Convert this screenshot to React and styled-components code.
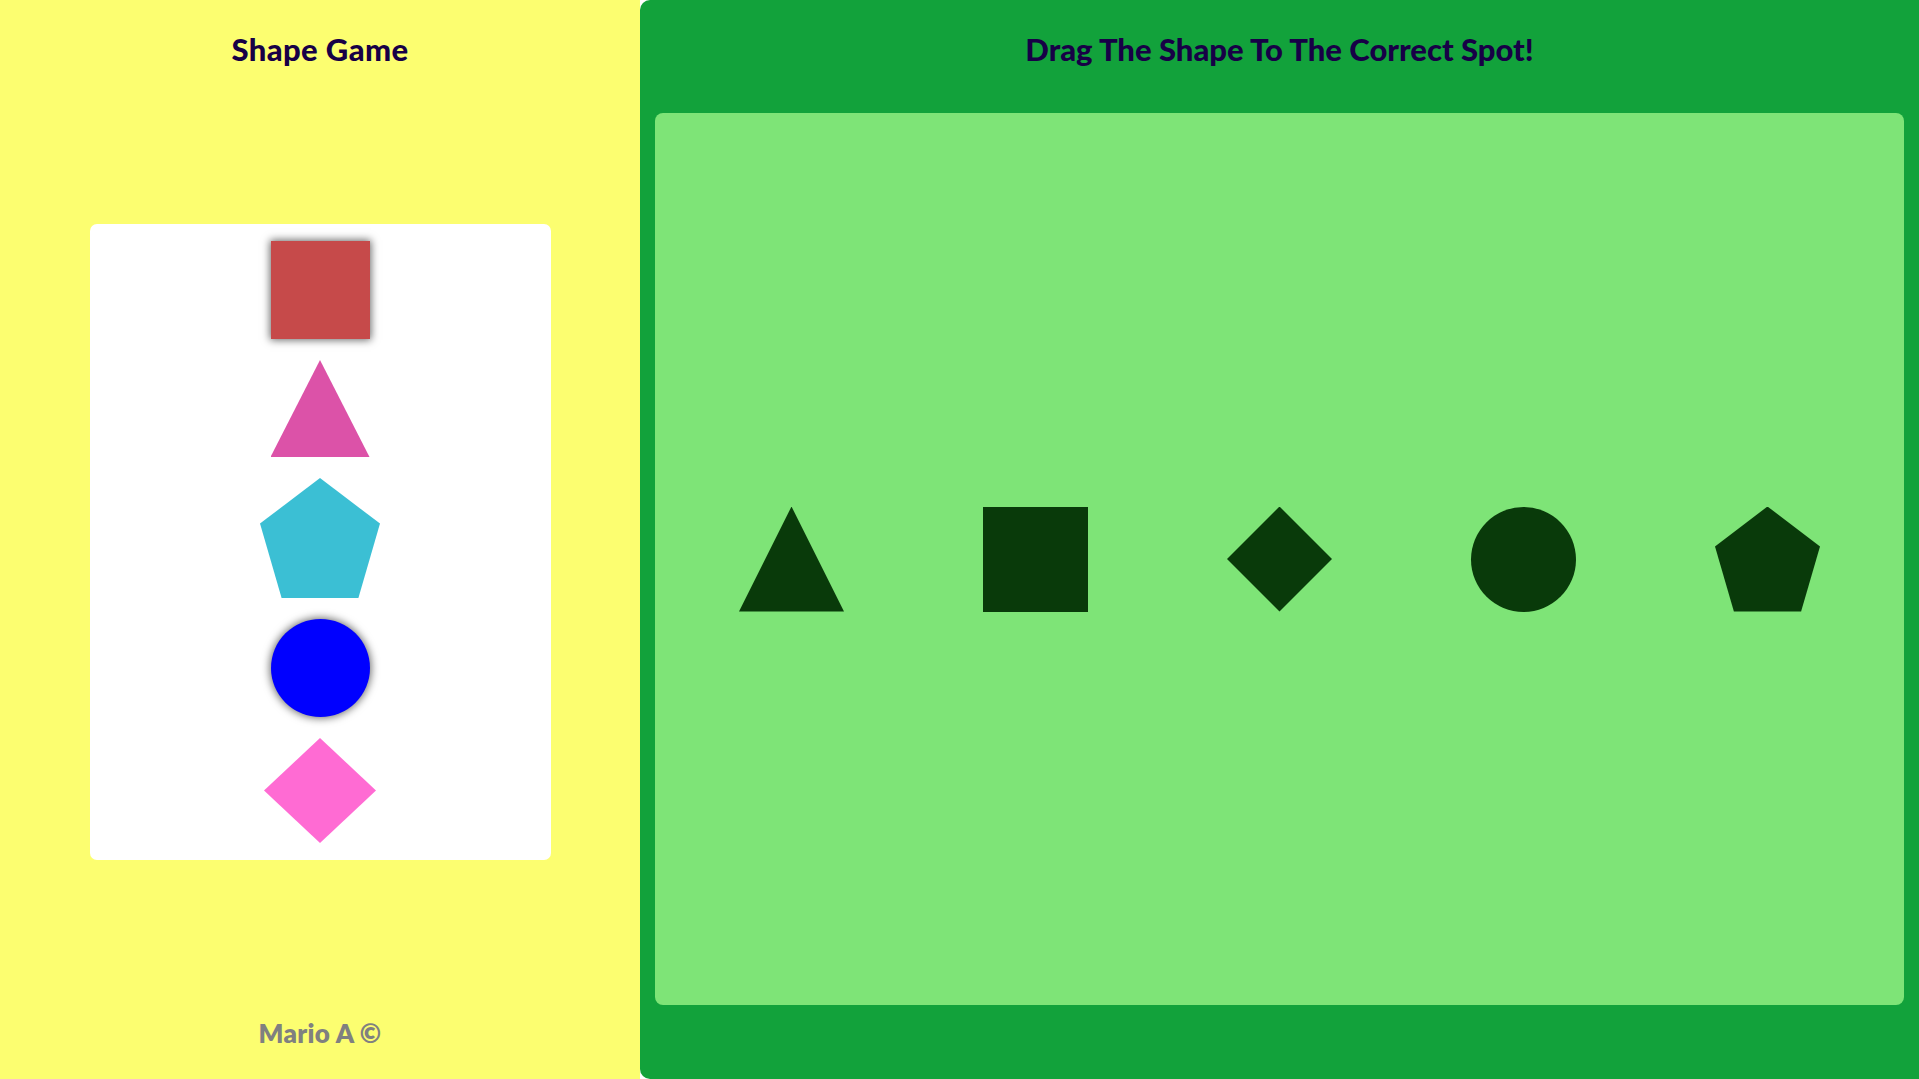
import React from "react";
import styled, { createGlobalStyle, css } from "styled-components";

const Global = createGlobalStyle`
  html, body { margin: 0; padding: 0; }
  body { font-family: Lato, "Noto Sans", sans-serif; }
  * { box-sizing: border-box; }
`;

const Page = styled.div`
  display: grid;
  grid-template-columns: 640px 1fr;
  height: 1079px;
  width: 1919px;
  overflow: hidden;
`;

const Side = styled.aside`
  background: #fcfe70;
  display: flex;
  flex-direction: column;
  align-items: center;
`;

const Heading = styled.h1`
  margin: 0;
  height: ${(p) => p.$height}px;
  padding-top: 31px;
  font-family: Lato, "Noto Sans", sans-serif;
  font-weight: 900;
  font-size: 31px;
  line-height: 36px;
  color: #170046;
  text-align: center;
  letter-spacing: ${(p) => p.$spacing}px;
`;

const CardArea = styled.div`
  flex: 1;
  display: flex;
  align-items: flex-start;
  justify-content: center;
  padding-top: 124px;
  width: 100%;
`;

const Card = styled.div`
  width: 461px;
  height: 636px;
  background: #ffffff;
  border-radius: 7px;
  padding-top: 17px;
  display: flex;
  flex-direction: column;
  align-items: center;
  gap: 21px;
`;

const clipFor = (kind) => {
  switch (kind) {
    case "triangle":
      return "polygon(50% 0, 100% 100%, 0 100%)";
    case "pentagon":
      return "polygon(50% 0%, 100% 38%, 82% 100%, 18% 100%, 0% 38%)";
    case "diamond":
      return "polygon(50% 0, 100% 50%, 50% 100%, 0 50%)";
    default:
      return "none";
  }
};

const Piece = styled.div`
  flex: none;
  width: ${(p) => p.$w}px;
  height: ${(p) => p.$h}px;
  background: ${(p) => p.$color};
  clip-path: ${(p) => clipFor(p.$kind)};
  border-radius: ${(p) => (p.$kind === "circle" ? "50%" : "0")};
  ${(p) =>
    (p.$kind === "square" || p.$kind === "circle") &&
    css`
      box-shadow: 0 0 8px 1px rgba(0, 0, 0, 0.6);
    `}
`;

const Footer = styled.footer`
  height: 90px;
  padding-top: 29px;
  font-family: Lato, "Noto Sans", sans-serif;
  font-weight: 800;
  font-size: 26px;
  line-height: 30px;
  color: #808080;
  letter-spacing: 0.3px;
`;

const Board = styled.main`
  background: #12a23b;
  border-radius: 10px 0 0 10px;
  display: flex;
  flex-direction: column;
  padding: 0 15px 74px 15px;
`;

const DropZone = styled.section`
  flex: 1;
  background: #7ee477;
  border-radius: 8px;
  display: flex;
  align-items: center;
  justify-content: center;
  gap: 139px;
`;

const Slot = styled.div`
  flex: none;
  width: 105px;
  height: 105px;
  background: #093a0a;
  clip-path: ${(p) => clipFor(p.$kind)};
  border-radius: ${(p) => (p.$kind === "circle" ? "50%" : "0")};
`;

const pieces = [
  { kind: "square", w: 99, h: 98, color: "#c64a4a" },
  { kind: "triangle", w: 99, h: 97, color: "#dc52a8" },
  { kind: "pentagon", w: 120, h: 120, color: "#3bbfd4" },
  { kind: "circle", w: 99, h: 98, color: "#0000ff" },
  { kind: "diamond", w: 112, h: 105, color: "#ff6bd3" },
];

const slots = ["triangle", "square", "diamond", "circle", "pentagon"];

export default function App() {
  return (
    <>
      <Global />
      <Page>
        <Side>
          <Heading $height={100} $spacing={0.4}>
            Shape Game
          </Heading>
          <CardArea>
            <Card>
              {pieces.map((p) => (
                <Piece
                  key={p.kind}
                  $kind={p.kind}
                  $w={p.w}
                  $h={p.h}
                  $color={p.color}
                />
              ))}
            </Card>
          </CardArea>
          <Footer>Mario A ©</Footer>
        </Side>
        <Board>
          <Heading as="h2" $height={113} $spacing={0}>
            Drag The Shape To The Correct Spot!
          </Heading>
          <DropZone>
            {slots.map((k) => (
              <Slot key={k} $kind={k} />
            ))}
          </DropZone>
        </Board>
      </Page>
    </>
  );
}
